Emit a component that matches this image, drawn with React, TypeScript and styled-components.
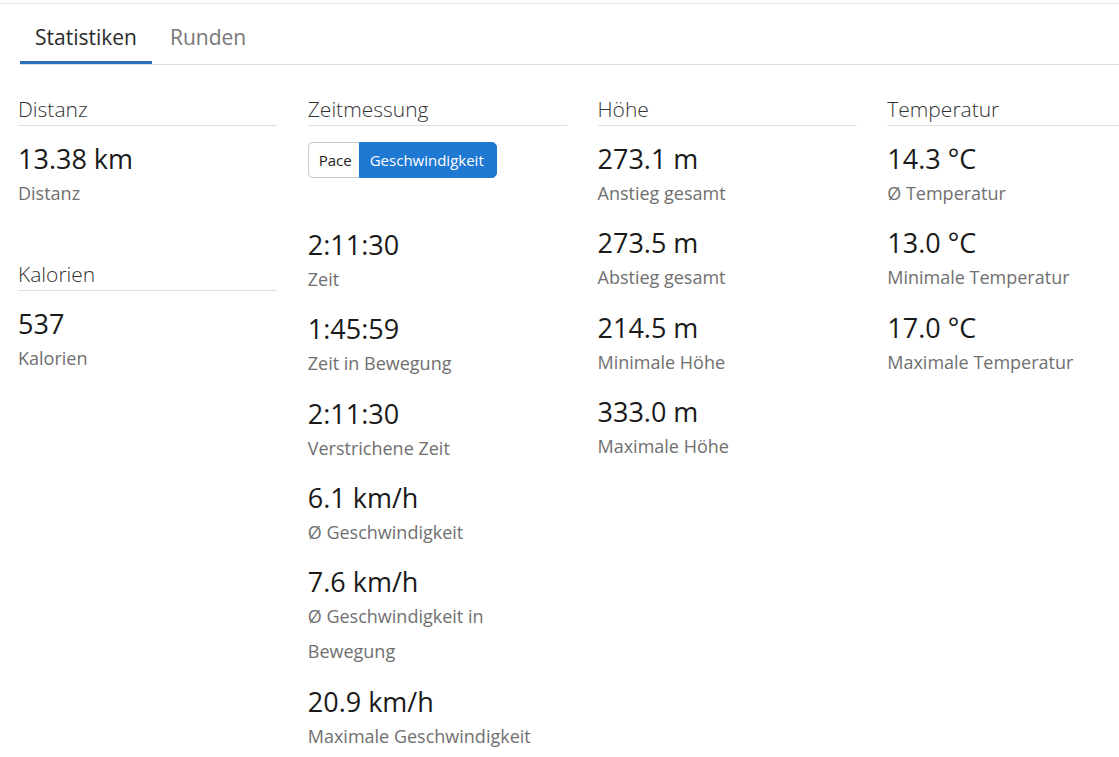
import React from 'react';
import styled, { createGlobalStyle } from 'styled-components';

const GlobalStyle = createGlobalStyle`
  html, body {
    margin: 0;
    padding: 0;
    background: #fff;
    overflow-x: hidden;
  }
  body {
    font-family: "Open Sans", "Noto Sans", sans-serif;
    color: #222;
  }
`;

const Page = styled.div`
  width: 1119px;
  overflow: hidden;
  border-top: 1px solid #e4e4e4;
  margin-top: 3px;
`;

const TabBar = styled.div`
  display: flex;
  gap: 3px;
  margin-left: 20px;
  border-bottom: 1px solid #dcdcdc;
`;

const Tab = styled.div<{ $active?: boolean }>`
  padding: 21px 15px 11px;
  font-size: 21px;
  line-height: 25px;
  color: ${(p) => (p.$active ? '#2b2b2b' : '#777')};
  border-bottom: 3px solid ${(p) => (p.$active ? '#2c6fbd' : 'transparent')};
`;

const Grid = styled.div`
  display: grid;
  grid-template-columns: repeat(4, 259px);
  column-gap: 30.75px;
  padding: 32px 0 0 18px;
  width: 1200px;
`;

const Column = styled.div`
  display: flex;
  flex-direction: column;
`;

const Section = styled.div`
  margin-bottom: 35.5px;
`;

const Header = styled.div`
  font-size: 21px;
  font-weight: 300;
  line-height: 25px;
  color: #333;
  padding-bottom: 3px;
  border-bottom: 1px solid #dedede;
  margin-bottom: 16px;
`;

const Stat = styled.div`
  margin-bottom: 15.33px;
`;

const Value = styled.div`
  font-size: 27px;
  line-height: 34px;
  color: #1a1a1a;
`;

const Label = styled.div`
  font-size: 18px;
  line-height: 35px;
  color: #707070;
`;

const Toggle = styled.div`
  display: flex;
  align-self: flex-start;
  height: 36px;
  margin-bottom: 50px;
`;

const ToggleButton = styled.div<{ $active?: boolean }>`
  display: flex;
  align-items: center;
  font-size: 15px;
  padding: 0 ${(p) => (p.$active ? '12px' : '7px')} 0 10px;
  color: ${(p) => (p.$active ? '#fff' : '#222')};
  background: ${(p) => (p.$active ? '#1f79d3' : '#fff')};
  border: 1px solid ${(p) => (p.$active ? '#1f79d3' : '#c9c9c9')};
  border-radius: ${(p) => (p.$active ? '0 5px 5px 0' : '5px 0 0 5px')};
  border-right-width: ${(p) => (p.$active ? '1px' : '0')};
`;

type StatItem = { value: string; label: string };

const StatList = ({ items }: { items: StatItem[] }) => (
  <>
    {items.map((s, i) => (
      <Stat key={i}>
        <Value>{s.value}</Value>
        <Label>{s.label}</Label>
      </Stat>
    ))}
  </>
);

const App = () => {
  return (
    <Page>
      <GlobalStyle />
      <TabBar>
        <Tab $active>Statistiken</Tab>
        <Tab>Runden</Tab>
      </TabBar>
      <Grid>
        <Column>
          <Section>
            <Header>Distanz</Header>
            <StatList items={[{ value: '13.38 km', label: 'Distanz' }]} />
          </Section>
          <Section>
            <Header>Kalorien</Header>
            <StatList items={[{ value: '537', label: 'Kalorien' }]} />
          </Section>
        </Column>
        <Column>
          <Header>Zeitmessung</Header>
          <Toggle>
            <ToggleButton>Pace</ToggleButton>
            <ToggleButton $active>Geschwindigkeit</ToggleButton>
          </Toggle>
          <StatList
            items={[
              { value: '2:11:30', label: 'Zeit' },
              { value: '1:45:59', label: 'Zeit in Bewegung' },
              { value: '2:11:30', label: 'Verstrichene Zeit' },
              { value: '6.1 km/h', label: 'Ø Geschwindigkeit' },
              { value: '7.6 km/h', label: 'Ø Geschwindigkeit in Bewegung' },
              { value: '20.9 km/h', label: 'Maximale Geschwindigkeit' },
            ]}
          />
        </Column>
        <Column>
          <Header>Höhe</Header>
          <StatList
            items={[
              { value: '273.1 m', label: 'Anstieg gesamt' },
              { value: '273.5 m', label: 'Abstieg gesamt' },
              { value: '214.5 m', label: 'Minimale Höhe' },
              { value: '333.0 m', label: 'Maximale Höhe' },
            ]}
          />
        </Column>
        <Column>
          <Header>Temperatur</Header>
          <StatList
            items={[
              { value: '14.3 °C', label: 'Ø Temperatur' },
              { value: '13.0 °C', label: 'Minimale Temperatur' },
              { value: '17.0 °C', label: 'Maximale Temperatur' },
            ]}
          />
        </Column>
      </Grid>
    </Page>
  );
};

export default App;
